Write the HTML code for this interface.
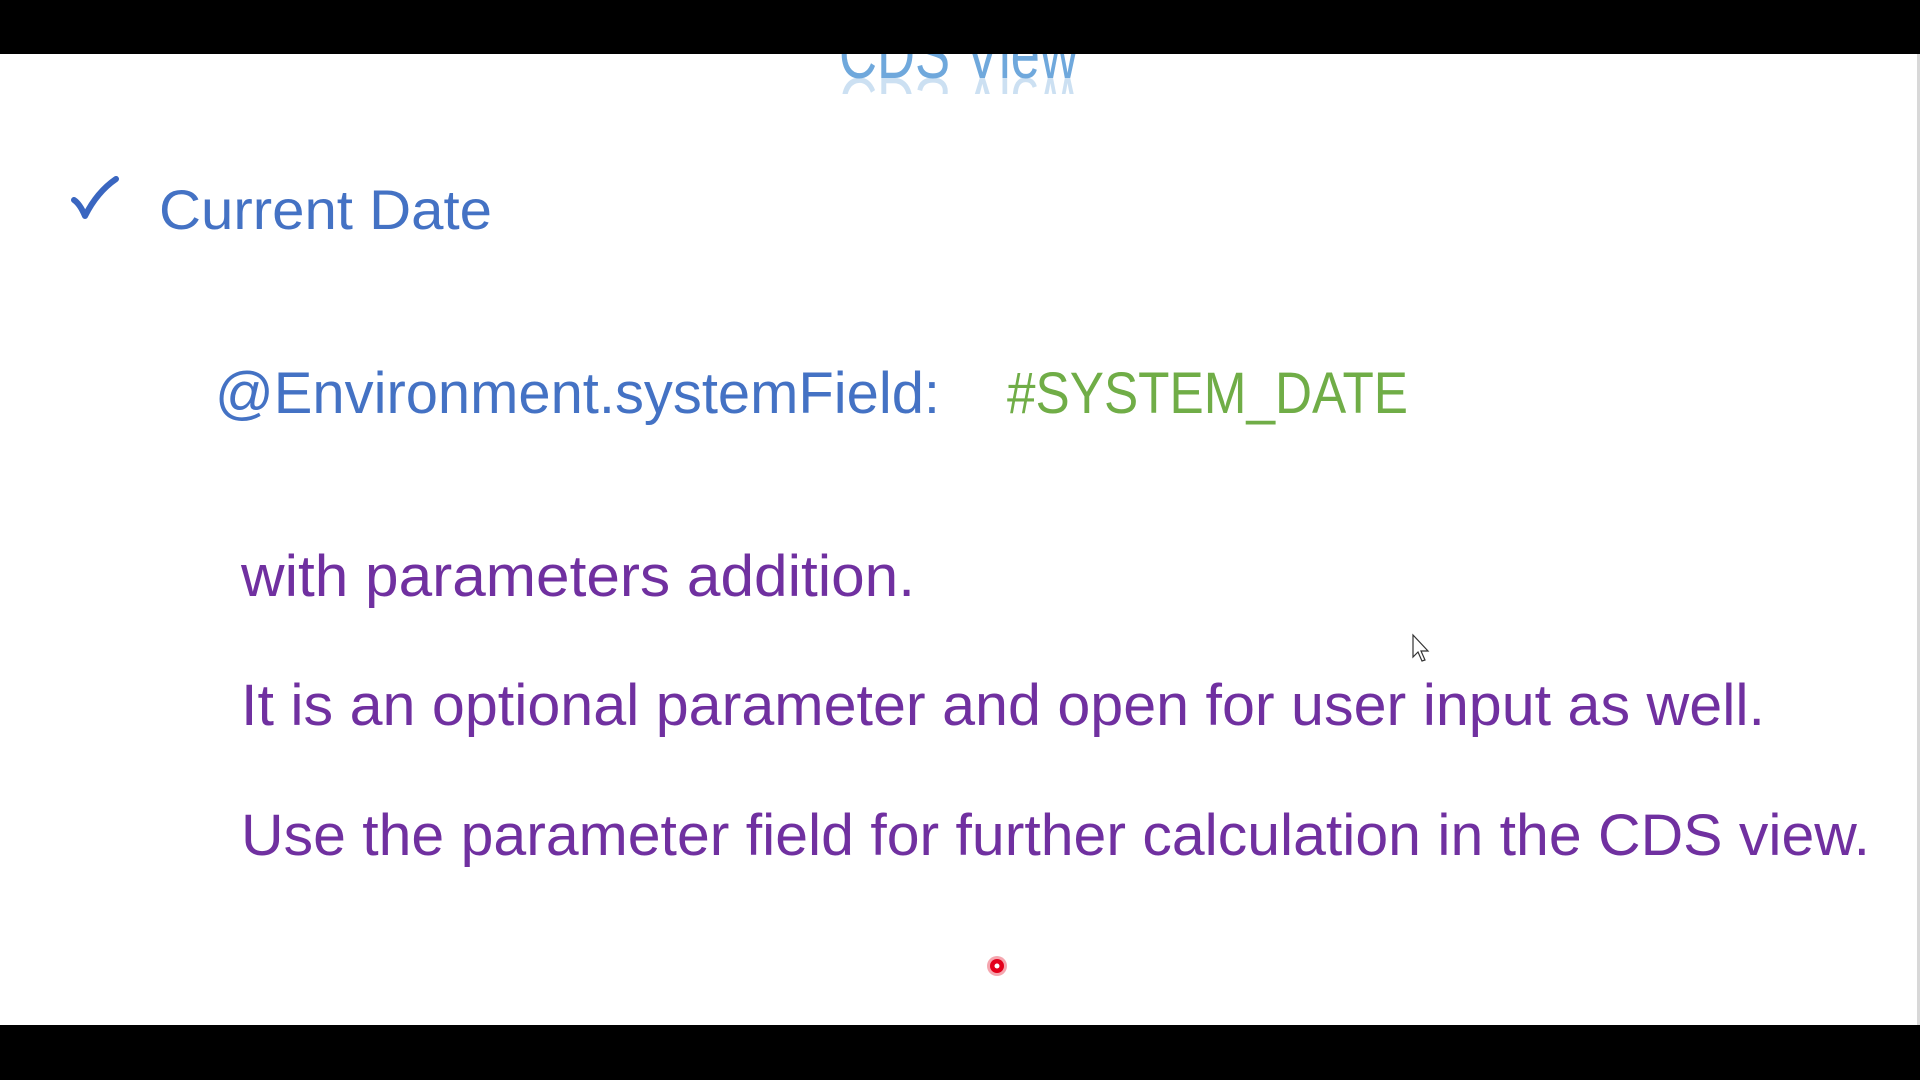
<!DOCTYPE html>
<html><head><meta charset="utf-8"><style>
html,body{margin:0;padding:0;background:#000;width:1920px;height:1080px;overflow:hidden}
svg{display:block}
</style></head><body>
<svg width="1920" height="1080" xmlns="http://www.w3.org/2000/svg" font-family="Liberation Sans, sans-serif">
<defs>
<clipPath id="rc"><rect x="800" y="78" width="320" height="16"/></clipPath>
</defs>
<rect x="0" y="54" width="1917" height="971" fill="#ffffff"/>
<rect x="1917" y="54" width="3" height="971" fill="#d8d8d8"/>
<g clip-path="url(#rc)" opacity="0.35">
<g transform="translate(0,156) scale(1,-1)">
<text x="839" y="78" font-size="70" fill="#6fa8dc" textLength="239" lengthAdjust="spacingAndGlyphs">CDS View</text>
</g>
</g>
<text x="839" y="78" font-size="70" fill="#6fa8dc" textLength="239" lengthAdjust="spacingAndGlyphs">CDS View</text>
<rect x="0" y="0" width="1920" height="54" fill="#000"/>
<path d="M74 200 Q80 204 85 216 Q97 192 116 179" fill="none" stroke="#3a66c0" stroke-width="6" stroke-linecap="round" stroke-linejoin="round"/>
<text x="159" y="229" font-size="56" fill="#4472c4" textLength="333" lengthAdjust="spacingAndGlyphs">Current Date</text>
<text x="215" y="413" font-size="58" fill="#4472c4" textLength="725" lengthAdjust="spacingAndGlyphs">@Environment.systemField:</text>
<text x="1007" y="413" font-size="58" fill="#70ad47" textLength="401" lengthAdjust="spacingAndGlyphs">#SYSTEM_DATE</text>
<text x="241" y="596" font-size="58" fill="#7030a0" textLength="674" lengthAdjust="spacingAndGlyphs">with parameters addition.</text>
<text x="241" y="725" font-size="58" fill="#7030a0" textLength="1524" lengthAdjust="spacingAndGlyphs">It is an optional parameter and open for user input as well.</text>
<text x="241" y="855" font-size="58" fill="#7030a0" textLength="1629" lengthAdjust="spacingAndGlyphs">Use the parameter field for further calculation in the CDS view.</text>
<path d="M1413 635 L1413 657 L1418 652 L1422 661 L1425 660 L1421 651 L1428 651 Z" fill="#fff" stroke="#333" stroke-width="1.2"/>
<circle cx="997" cy="966" r="10" fill="#e3001b" opacity="0.35"/>
<circle cx="997" cy="966" r="7" fill="#e3001b"/>
<circle cx="997" cy="966" r="2.5" fill="#fff"/>
</svg>
</body></html>
